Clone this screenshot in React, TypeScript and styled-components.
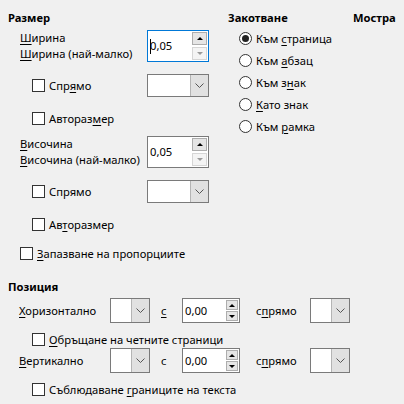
import React from "react";
import styled, { createGlobalStyle } from "styled-components";

const GlobalStyle = createGlobalStyle`
  html, body {
    margin: 0;
    padding: 0;
    background: #f0f0f0;
  }
  body {
    font-family: "Noto Sans", "Liberation Sans", sans-serif;
    font-size: 11.2px;
    color: #000;
  }
`;

const Dialog = styled.div`
  width: 404px;
  height: 404px;
  box-sizing: border-box;
  padding: 10px 0 0 8px;
  background: #f0f0f0;
  display: flex;
  flex-direction: column;
`;

const Top = styled.div`
  display: flex;
`;

const SizeColumn = styled.div`
  width: 220px;
  display: flex;
  flex-direction: column;
`;

const AnchorColumn = styled.div`
  width: 125px;
  display: flex;
  flex-direction: column;
`;

const Title = styled.div<{ $top?: number }>`
  height: 16px;
  line-height: 16px;
  font-weight: bold;
  margin-top: ${(p) => p.$top ?? 0}px;
`;

const Accel = styled.span`
  text-decoration: underline;
  text-underline-offset: 2px;
  text-decoration-thickness: 1px;
`;

/* rows of the size block: label on the left, control at x = 147 */
const FieldRow = styled.div<{ $top: number; $h: number; $indent: number }>`
  display: grid;
  grid-template-columns: ${(p) => 139 - p.$indent}px 62px;
  align-items: center;
  height: ${(p) => p.$h}px;
  margin-top: ${(p) => p.$top}px;
  padding-left: ${(p) => p.$indent}px;
  white-space: nowrap;
`;

const LabelStack = styled.div`
  display: flex;
  flex-direction: column;
  line-height: 16px;
`;

const CheckRow = styled.div<{ $top: number; $indent: number }>`
  display: flex;
  align-items: center;
  gap: 4px;
  height: 20px;
  margin-top: ${(p) => p.$top}px;
  padding-left: ${(p) => p.$indent}px;
  white-space: nowrap;
`;

const CheckBox = styled.span`
  width: 13px;
  height: 13px;
  box-sizing: border-box;
  border: 1px solid #333;
  background: #fff;
  flex: none;
`;

const RadioRow = styled.div<{ $top?: number }>`
  display: flex;
  align-items: center;
  gap: 4px;
  height: 22px;
  margin-top: ${(p) => p.$top ?? 0}px;
  padding-left: 11px;
  white-space: nowrap;
`;

const Radio = styled.span<{ $checked?: boolean }>`
  width: 13px;
  height: 13px;
  box-sizing: border-box;
  border: 1px solid #333;
  border-radius: 50%;
  background: #fff;
  flex: none;
  display: flex;
  align-items: center;
  justify-content: center;
  &::after {
    content: "";
    width: 7px;
    height: 7px;
    border-radius: 50%;
    background: ${(p) => (p.$checked ? "#222" : "transparent")};
  }
`;

/* spin field */
const SpinBox = styled.div<{ $w: number; $h: number; $focus?: boolean }>`
  width: ${(p) => p.$w}px;
  height: ${(p) => p.$h}px;
  box-sizing: border-box;
  border: 1px solid ${(p) => (p.$focus ? "#0078d7" : "#7a7a7a")};
  background: #fff;
  display: flex;
  align-items: center;
  padding: 1px 1px 1px 2px;
`;

const SpinValue = styled.div`
  flex: 1;
  display: flex;
  align-items: center;
  line-height: 14px;
`;

const Caret = styled.span`
  display: inline-block;
  width: 1px;
  height: 15px;
  background: #000;
  margin-right: -1px;
`;

const SpinButtons = styled.div<{ $gap: number }>`
  display: flex;
  flex-direction: column;
  gap: ${(p) => p.$gap}px;
`;

const SpinButton = styled.div<{ $w: number; $h: number; $disabled?: boolean }>`
  width: ${(p) => p.$w}px;
  height: ${(p) => p.$h}px;
  box-sizing: border-box;
  border: 1px solid ${(p) => (p.$disabled ? "#d6d6d6" : "#adadad")};
  background: ${(p) => (p.$disabled ? "#f4f4f4" : "#e5e5e5")};
  display: flex;
  align-items: center;
  justify-content: center;
`;

const Arrow = styled.span<{ $down?: boolean; $disabled?: boolean }>`
  width: 0;
  height: 0;
  border-left: 3px solid transparent;
  border-right: 3px solid transparent;
  ${(p) =>
    p.$down
      ? `border-top: 3px solid ${p.$disabled ? "#9a9a9a" : "#000"};`
      : `border-bottom: 3px solid ${p.$disabled ? "#9a9a9a" : "#000"};`}
`;

/* drop-down */
const Combo = styled.div<{ $w: number; $h: number }>`
  width: ${(p) => p.$w}px;
  height: ${(p) => p.$h}px;
  box-sizing: border-box;
  border: 1px solid #7a7a7a;
  background: #fff;
  display: flex;
  justify-content: flex-end;
`;

const ComboButton = styled.div`
  width: 17px;
  background: #e1e1e1;
  border-left: 1px solid #b4b4b4;
  display: flex;
  align-items: center;
  justify-content: center;
`;

/* position block */
const PosRow = styled.div<{ $top: number }>`
  display: grid;
  grid-template-columns: 91px 40px 32px 58px 70px 40px;
  align-items: center;
  height: 25px;
  margin-top: ${(p) => p.$top}px;
  padding-left: 11px;
  white-space: nowrap;
`;

const PosText = styled.span<{ $pad: number }>`
  padding-left: ${(p) => p.$pad}px;
`;

const Chevron = () => (
  <svg width="9" height="5" viewBox="0 0 9 5">
    <polyline points="0.5,0.5 4.5,4.5 8.5,0.5" fill="none" stroke="#555" strokeWidth="1" />
  </svg>
);

const Spin = ({
  value,
  w,
  h,
  big,
  focus,
  downDisabled,
}: {
  value: string;
  w: number;
  h: number;
  big?: boolean;
  focus?: boolean;
  downDisabled?: boolean;
}) => (
  <SpinBox $w={w} $h={h} $focus={focus}>
    <SpinValue>
      {focus && <Caret />}
      {value}
    </SpinValue>
    <SpinButtons $gap={big ? 2 : 1}>
      <SpinButton $w={big ? 15 : 12} $h={big ? 13 : 10}>
        <Arrow />
      </SpinButton>
      <SpinButton $w={big ? 15 : 12} $h={big ? 13 : 10} $disabled={downDisabled}>
        <Arrow $down $disabled={downDisabled} />
      </SpinButton>
    </SpinButtons>
  </SpinBox>
);

const Drop = ({ w, h }: { w: number; h: number }) => (
  <Combo $w={w} $h={h}>
    <ComboButton>
      <Chevron />
    </ComboButton>
  </Combo>
);

export default function App() {
  return (
    <>
      <GlobalStyle />
      <Dialog>
        <Top>
          <SizeColumn>
            <Title>Размер</Title>
            <FieldRow $top={4} $h={32} $indent={12}>
              <LabelStack>
                <span>
                  <Accel>Ш</Accel>ирина
                </span>
                <span>
                  <Accel>Ш</Accel>ирина (най-малко)
                </span>
              </LabelStack>
              <Spin value="0,05" w={62} h={32} big focus downDisabled />
            </FieldRow>
            <FieldRow $top={12} $h={23} $indent={24}>
              <CheckRow $top={0} $indent={0}>
                <CheckBox />
                <span>
                  Спр<Accel>я</Accel>мо
                </span>
              </CheckRow>
              <Drop w={62} h={23} />
            </FieldRow>
            <CheckRow $top={11} $indent={24}>
              <CheckBox />
              <span>
                Автораз<Accel>м</Accel>ер
              </span>
            </CheckRow>
            <FieldRow $top={8} $h={32} $indent={12}>
              <LabelStack>
                <span>
                  <Accel>В</Accel>исочина
                </span>
                <span>
                  <Accel>В</Accel>исочина (най-малко)
                </span>
              </LabelStack>
              <Spin value="0,05" w={62} h={32} big downDisabled />
            </FieldRow>
            <FieldRow $top={12} $h={23} $indent={24}>
              <CheckRow $top={0} $indent={0}>
                <CheckBox />
                <span>Спрямо</span>
              </CheckRow>
              <Drop w={62} h={23} />
            </FieldRow>
            <CheckRow $top={11} $indent={24}>
              <CheckBox />
              <span>
                Ав<Accel>т</Accel>оразмер
              </span>
            </CheckRow>
            <CheckRow $top={9} $indent={12}>
              <CheckBox />
              <span>
                <Accel>З</Accel>апазване на пропорциите
              </span>
            </CheckRow>
          </SizeColumn>

          <AnchorColumn>
            <Title>Закотване</Title>
            <RadioRow $top={1}>
              <Radio $checked />
              <span>
                Към <Accel>с</Accel>траница
              </span>
            </RadioRow>
            <RadioRow>
              <Radio />
              <span>
                Към <Accel>а</Accel>бзац
              </span>
            </RadioRow>
            <RadioRow>
              <Radio />
              <span>
                Към з<Accel>н</Accel>ак
              </span>
            </RadioRow>
            <RadioRow>
              <Radio />
              <span>
                <Accel>К</Accel>ато знак
              </span>
            </RadioRow>
            <RadioRow>
              <Radio />
              <span>
                Към <Accel>р</Accel>амка
              </span>
            </RadioRow>
          </AnchorColumn>

          <div>
            <Title>Мостра</Title>
          </div>
        </Top>

        <Title $top={16}>Позиция</Title>
        <PosRow $top={3}>
          <span>
            <Accel>Х</Accel>оризонтално
          </span>
          <Drop w={40} h={25} />
          <PosText $pad={11}>
            <Accel>с</Accel>
          </PosText>
          <Spin value="0,00" w={58} h={25} />
          <PosText $pad={16}>
            с<Accel>п</Accel>рямо
          </PosText>
          <Drop w={40} h={25} />
        </PosRow>
        <CheckRow $top={6} $indent={24}>
          <CheckBox />
          <span>
            <Accel>О</Accel>бръщане на четните страници
          </span>
        </CheckRow>
        <PosRow $top={-1}>
          <span>
            <Accel>В</Accel>ертикално
          </span>
          <Drop w={40} h={25} />
          <PosText $pad={11}>с</PosText>
          <Spin value="0,00" w={58} h={25} />
          <PosText $pad={16}>
            с<Accel>п</Accel>рямо
          </PosText>
          <Drop w={40} h={25} />
        </PosRow>
        <CheckRow $top={6} $indent={24}>
          <CheckBox />
          <span>
            Съблюдаване <Accel>г</Accel>раниците на текста
          </span>
        </CheckRow>
      </Dialog>
    </>
  );
}
